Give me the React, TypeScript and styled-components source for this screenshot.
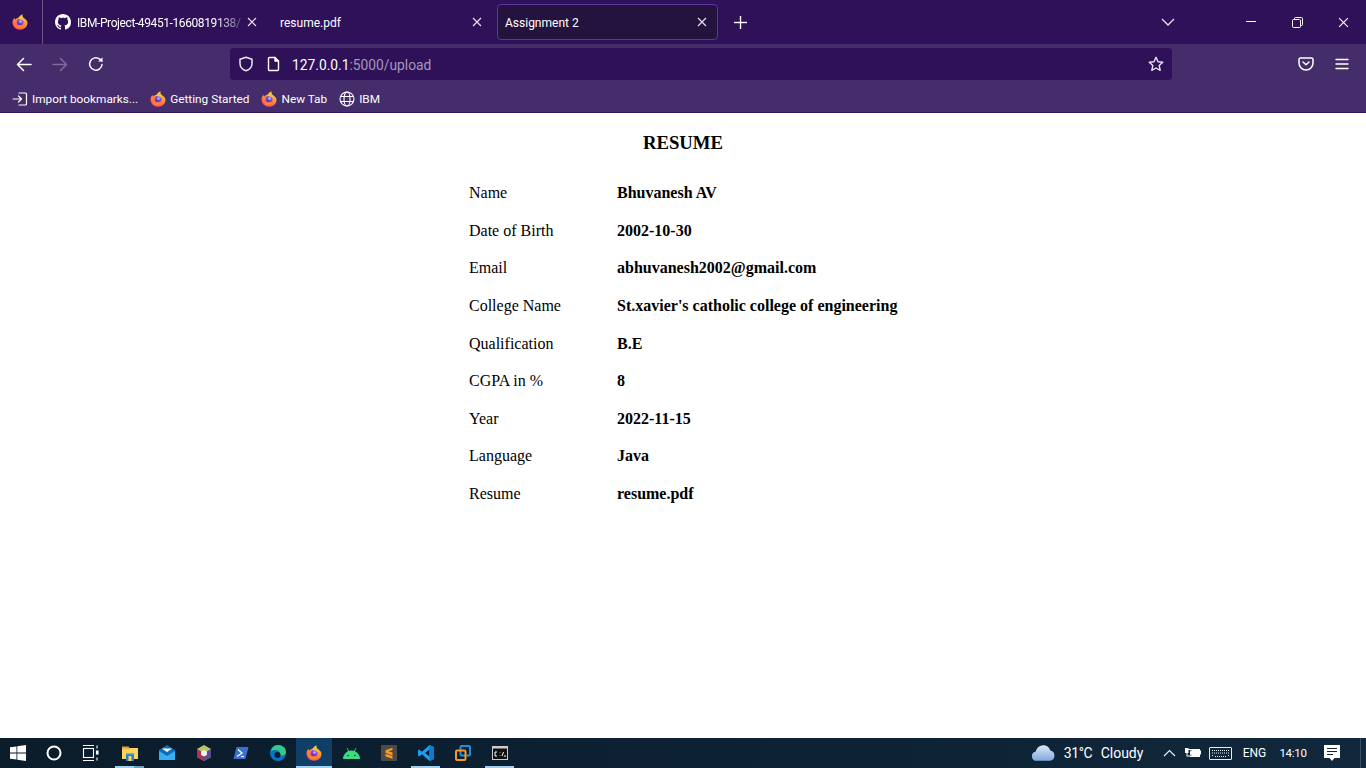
import React from "react";
import styled, { createGlobalStyle } from "styled-components";

const Global = createGlobalStyle`
  html, body { margin: 0; padding: 0; height: 100%; overflow: hidden; background: #fff; }
  #root { height: 100%; }
`;
const UI = `"Roboto", "Noto Sans", sans-serif`;

const Page = styled.div`display:flex;flex-direction:column;height:768px;width:1366px;overflow:hidden;`;
const TabBar = styled.div`display:flex;align-items:flex-start;height:44px;background:#2e1159;flex:none;color:#fff;font:12px/16px ${UI};`;
const MenuButton = styled.div`box-sizing:border-box;width:43px;height:44px;padding-right:2px;border-right:1px solid #6b5586;display:flex;align-items:center;justify-content:center;flex:none;`;
const Tab = styled.div<{ $w: number; $active?: boolean; $ml?: number; $pl?: number }>`
  box-sizing:border-box;width:${p => p.$w}px;height:36px;margin-top:4px;margin-left:${p => p.$ml ?? 0}px;flex:none;
  display:flex;align-items:center;padding:0 10px 0 ${p => p.$pl ?? 12}px;gap:6px;border-radius:4px;
  ${p => p.$active ? "background:#25133f;border:1px solid #5b35a0;" : ""}
`;
const TabLabel = styled.span<{ $fade?: boolean }>`
  flex:1;min-width:0;white-space:nowrap;overflow:hidden;padding-top:1px;
  ${p => p.$fade ? "letter-spacing:-.4px;mask-image:linear-gradient(to right,#000 84%,rgba(0,0,0,.25) 100%);" : ""}
`;
const NewTab = styled.div`width:44px;height:44px;display:flex;align-items:center;justify-content:center;flex:none;`;
const TabSpacer = styled.div`flex:1;`;
const BarIcon = styled.div<{ $w: number }>`width:${p => p.$w}px;height:44px;display:flex;align-items:center;justify-content:center;flex:none;`;
const NavBar = styled.div`display:flex;align-items:center;height:40px;background:#452c6a;flex:none;padding:0 6px 0 6px;color:#fff;`;
const NavButton = styled.div<{ $w?: number }>`width:${p => p.$w ?? 36}px;height:32px;display:flex;align-items:center;justify-content:center;flex:none;`;
const UrlBar = styled.div`width:942px;height:32px;margin:0 116px 0 116px;background:#2e1159;border-radius:4px;display:flex;align-items:center;padding:0 6px 0 8px;box-sizing:border-box;flex:none;`;
const UrlIcon = styled.div<{ $w: number; $ml?: number }>`width:${p => p.$w}px;margin-left:${p => p.$ml ?? 0}px;display:flex;align-items:center;justify-content:center;flex:none;`;
const UrlText = styled.div`flex:1;font:13.8px/18px ${UI};color:#fff;margin-left:10px;padding-top:2px;`;
const Dim = styled.span`color:#a698bb;`;
const Bookmarks = styled.div`display:flex;align-items:center;height:26px;background:#452c6a;flex:none;border-bottom:1px solid #2e1159;padding:2px 0 0 12px;gap:12px;color:#fff;font:11.8px/16px ${UI};`;
const Bookmark = styled.div`display:flex;align-items:center;gap:4px;white-space:nowrap;`;
const Content = styled.main`flex:1;background:#fff;color:#000;font:16px/18px "Liberation Serif","Times New Roman",serif;`;
const Title = styled.h1`font:bold 18.72px/22px "Liberation Serif",serif;margin:0;text-align:center;padding-top:19px;`;
const Table = styled.div`display:grid;grid-template-columns:148px 1fr;grid-auto-rows:37.6px;align-items:center;margin:20.5px 0 0 469px;`;
const Label = styled.div``;
const Value = styled.div`font-weight:bold;`;
const Taskbar = styled.div`display:flex;align-items:stretch;height:30px;flex:none;background:linear-gradient(to right,#0b1c2b,#0c2133 50%,#11273b);color:#fff;font:12px/30px ${UI};`;
const Cell = styled.div<{ $w?: number; $active?: boolean; $open?: boolean; $stack?: boolean; $ml?: number }>`
  position:relative;width:${p => p.$w ?? 37}px;margin-left:${p => p.$ml ?? 0}px;display:flex;align-items:center;justify-content:center;flex:none;
  ${p => p.$active ? "background:#0f3f66;" : ""}
  ${p => p.$open ? `&::after{content:"";position:absolute;left:${p.$active ? 0 : 4}px;right:${p.$active ? 0 : 4}px;bottom:0;height:2px;background:${p.$stack ? "linear-gradient(to right,#9fd0f0 66%,#6f9fc4 66%)" : "#9fd0f0"};}` : ""}
`;
const Tray = styled.div`margin-left:auto;display:flex;align-items:stretch;`;
const TrayText = styled.div<{ $w: number; $size?: number; $track?: number }>`width:${p => p.$w}px;font-size:${p => p.$size ?? 12}px;letter-spacing:${p => p.$track ?? 0}px;text-align:center;white-space:nowrap;flex:none;`;
const TrayEnd = styled.div`width:5px;margin-left:13px;border-left:1px solid #3a4d5f;flex:none;`;

let uid = 0;
const Firefox = ({ size = 16 }: { size?: number }) => {
  const id = "ff" + uid++;
  const pid = "fp" + uid++;
  return (
    <svg width={size} height={size} viewBox="0 0 32 32">
      <defs>
        <linearGradient id={id} x1="0.75" y1="0" x2="0.25" y2="1">
          <stop offset="0" stopColor="#ffe83f" />
          <stop offset="0.4" stopColor="#ff9a2a" />
          <stop offset="1" stopColor="#ff3d75" />
        </linearGradient>
        <linearGradient id={pid} x1="0.8" y1="0" x2="0.2" y2="1">
          <stop offset="0" stopColor="#9a6cf8" />
          <stop offset="1" stopColor="#5a28c0" />
        </linearGradient>
      </defs>
      <path d="M21 0.500C20 5 22 7 25 9C28.500 11.500 31 14 31 18C31 25.500 24.500 31.500 16 31.500C7.500 31.500 1 25 1 17C1 13 2.800 10 5 7.500C5 9.500 5.800 10.500 7 11C8 9 10 8 12.500 8C14 5 17 2.500 21 0.500z" fill={`url(#${id})`} />
      <circle cx="16.500" cy="16" r="7" fill={`url(#${pid})`} />
      <circle cx="17" cy="15" r="2.600" fill="#c0adff" />
      <path d="M3.500 14C5 19.500 9 23 15 23C20 23 23 20.500 24 16.500C25 23 21 29 15 29C8 29 3 22.500 3.500 14z" fill="#ff8230" />
      <path d="M13 7.800C18 7 23.500 10.500 25 16C22 12 18 10 13 10z" fill="#ffcf34" />
    </svg>
  );
};
const Github = () => (
  <svg width="16" height="16" viewBox="0 0 16 16" fill="#fff" style={{ flex: "none" }}>
    <path d="M8 0C3.580 0 0 3.580 0 8c0 3.540 2.290 6.530 5.470 7.590.4.070.55-.17.55-.38 0-.19-.01-.82-.01-1.490-2.010.37-2.530-.49-2.690-.94-.09-.23-.48-.94-.82-1.130-.28-.15-.68-.52-.01-.53.63-.01 1.080.58 1.230.82.720 1.210 1.870.870 2.330.660.070-.520.280-.870.510-1.070-1.780-.200-3.640-.890-3.640-3.950 0-.870.310-1.590.820-2.150-.080-.200-.360-1.020.080-2.120 0 0 .670-.210 2.200.820.640-.180 1.320-.270 2-.270s1.360.090 2 .270c1.530-1.040 2.200-.820 2.200-.820.440 1.100.160 1.920.080 2.120.510.560.820 1.270.820 2.150 0 3.070-1.870 3.750-3.650 3.950.290.250.540.730.540 1.480 0 1.070-.010 1.930-.010 2.200 0 .210.150.460.550.380A8.010 8.010 0 0 0 16 8c0-4.420-3.580-8-8-8z" />
  </svg>
);
const Close = ({ size = 10, w = 1.200, color = "#e6e0ee" }: { size?: number; w?: number; color?: string }) => (
  <svg width={size} height={size} viewBox="0 0 10 10" stroke={color} strokeWidth={w} fill="none" style={{ flex: "none" }}>
    <path d="M1 1l8 8M9 1l-8 8" />
  </svg>
);
const Stroke = ({ s = 16, c = "#fff", sw = 1.500, children }: { s?: number; c?: string; sw?: number; children: React.ReactNode }) => (
  <svg width={s} height={s} viewBox="0 0 16 16" fill="none" stroke={c} strokeWidth={sw} strokeLinecap="round" strokeLinejoin="round">{children}</svg>
);
const Back = () => <Stroke><path d="M15 8.500H1.500M7.500 2.500L1.500 8.500l6 6" /></Stroke>;
const Fwd = ({ c = "#fff" }: { c?: string }) => <Stroke c={c}><path d="M1 8.500h13.500M8.500 2.500l6 6-6 6" /></Stroke>;
const Reload = () => <Stroke><path d="M14 8.500A6.200 6.200 0 1 1 11.800 3.200L14 5" /><path d="M14.500 1.200v4.300h-4.300z" fill="#fff" stroke="none" /></Stroke>;
const Shield = () => <Stroke c="#ece8f2"><path d="M8 1.200l6 2v4.300c0 3.800-2.600 6.200-6 7.300-3.400-1.100-6-3.500-6-7.300V3.200z" /></Stroke>;
const PageIcon = () => <Stroke sw={1.400}><path d="M3.500 1.500h5.500l3.500 3.500v8.500a1 1 0 0 1-1 1h-8a1 1 0 0 1-1-1v-11a1 1 0 0 1 1-1z" /><path d="M9 1.500v3.500h3.500" fill="#fff" /></Stroke>;
const Star = () => <Stroke sw={1.400} c="#e8e2ef"><path d="M8 1.300l2 4.500 4.800.5-3.600 3.200 1 4.800L8 12l-4.200 2.300 1-4.800L1.200 6.300 6 5.800z" /></Stroke>;
const Pocket = () => <Stroke><path d="M2.500 2h11A1.500 1.500 0 0 1 15 3.500V7a7 7 0 0 1-14 0V3.500A1.500 1.500 0 0 1 2.500 2z" /><path d="M5 6l3 2.800L11 6" /></Stroke>;
const Burger = () => <Stroke sw={1.400}><path d="M2 3.500h12M2 8h12M2 12.500h12" /></Stroke>;
const Plus = () => <svg width="13" height="13" viewBox="0 0 13 13" fill="#fff"><rect x="5.800" width="1.400" height="13" /><rect y="5.800" width="13" height="1.400" /></svg>;
const Globe = () => (
  <Stroke sw={1.100}>
    <circle cx="8" cy="8" r="7" /><ellipse cx="8" cy="8" rx="3" ry="7" /><path d="M1.500 5.500h13M1.500 10.500h13" />
  </Stroke>
);
const ImportIcon = () => (
  <Stroke sw={1.200}><path d="M7 2h6.500a1 1 0 0 1 1 1v10a1 1 0 0 1-1 1H7M1 8h8.500M6.500 5l3 3-3 3" /></Stroke>
);
const WinLogo = () => (
  <svg width="16" height="16" viewBox="0 0 16 16" fill="#fff"><path d="M0 2.300l6.500-.9v6.200H0zM7.300 1.300L16 0v7.600H7.300zM0 8.400h6.500v6.200L0 13.700zM7.300 8.400H16V16l-8.700-1.300z" /></svg>
);
const Cortana = () => <svg width="16" height="16" viewBox="0 0 16 16"><circle cx="8" cy="8" r="6.500" fill="none" stroke="#fff" strokeWidth="2" /></svg>;
const TaskView = () => (
  <svg width="17" height="16" viewBox="0 0 17 16" fill="none" stroke="#fff" strokeWidth="1.100">
    <path d="M1 .5h11M1 15.500h11" /><rect x="1.500" y="3.500" width="10" height="9" /><path d="M15 .5v3M15 12.500v3" /><rect x="14.500" y="6" width="1.500" height="3" fill="#fff" />
  </svg>
);
const Explorer = () => (
  <svg width="16" height="16" viewBox="0 0 16 16">
    <path d="M0 1.500h6.500l1.500 2H0z" fill="#e0a526" /><rect y="3" width="16" height="11" fill="#fcd462" />
    <path d="M0 3h8v1.500H0z" fill="#f0b93a" /><rect x="4" y="8" width="8" height="8" fill="#2a7fc4" /><rect x="6.500" y="11" width="3" height="5" fill="#fcd462" /><rect x="4" y="8" width="8" height="1.500" fill="#5cb0e8" />
  </svg>
);
const Mail = () => (
  <svg width="16" height="16" viewBox="0 0 16 16"><path d="M0 5l8-5 8 5v10H0z" fill="#0f6cb8" /><path d="M0 6l8 5 8-5v9H0z" fill="#36aef0" /><path d="M3 3.500h10L8 7z" fill="#fff" /></svg>
);
const BoxApp = () => (
  <svg width="16" height="16" viewBox="0 0 16 16">
    <path d="M8 0l7 4v8l-7 4-7-4V4z" fill="#b6c46a" /><path d="M1 4l7 4v8l-7-4z" fill="#b03050" /><path d="M15 4l-7 4v8l7-4z" fill="#5a4a90" /><path d="M5 6.500l3-1.500 3 1.500v3.500l-3 1.500-3-1.500z" fill="#eee" />
  </svg>
);
const PowerShell = () => (
  <svg width="16" height="14" viewBox="0 0 16 14"><path d="M3.500 1h12L12.500 13H.5z" fill="#3a6fd0" /><path d="M5 3.500L9 7l-5 3.500" fill="none" stroke="#fff" strokeWidth="1.300" /><path d="M8 10.500h3" stroke="#fff" strokeWidth="1.200" /></svg>
);
const Edge = () => (
  <svg width="16" height="16" viewBox="0 0 16 16">
    <circle cx="8" cy="8" r="8" fill="#0c72c4" /><path d="M1 6C2 2 5 0 8 0c4.500 0 8 3 8 7 0 2.500-2 3.500-4 3.500-1.500 0-3-.5-3-1.500 2-1 0-4-3-4-2 0-4 .5-5 1z" fill="#35c88a" /><circle cx="7.500" cy="10" r="3" fill="#0b1c2b" />
  </svg>
);
const Android = () => (
  <svg width="17" height="11" viewBox="0 0 17 11" fill="#3ddc84"><path d="M0 11a8.500 8.500 0 0 1 17 0z" /><path d="M4 .2l2 3.500M13 .2l-2 3.500" stroke="#3ddc84" strokeWidth=".9" /><circle cx="5" cy="7.500" r=".8" fill="#0c2133" /><circle cx="12" cy="7.500" r=".8" fill="#0c2133" /></svg>
);
const Sublime = () => (
  <svg width="16" height="16" viewBox="0 0 16 16"><rect width="16" height="16" rx="1" fill="#4a4a4a" /><path d="M11.500 2.800L4.500 5.200v2.600l7 2.400V7.600l-4.300-1.300 4.300-1.300zM4.500 8.500l7 2.300v-.3L4.500 8.200zM4.500 9v2.600l7 2.100-.1-2.600z" fill="#ff9a1f" /></svg>
);
const VSCode = () => (
  <svg width="16" height="16" viewBox="0 0 16 16"><path d="M11.500 0L16 2v12l-4.500 2L4 9.200 1.200 11.400 0 10.700V5.300l1.200-.7L4 6.800z" fill="#1f9cf0" /><path d="M11.500 4.500L7 8l4.500 3.500z" fill="#0b1c2b" /><path d="M11.500 0L16 2v12l-4.500 2z" fill="#0e7ccc" /></svg>
);
const Squares = () => (
  <svg width="16" height="16" viewBox="0 0 16 16" fill="none" strokeWidth="2"><rect x="5.500" y="1" width="9.500" height="9.500" rx="1" stroke="#1e8fdc" /><rect x="1" y="5.500" width="9.500" height="9.500" rx="1" stroke="#f59a23" /></svg>
);
const Cmd = () => (
  <svg width="16" height="14" viewBox="0 0 16 14"><rect x=".5" y=".5" width="15" height="13" fill="#111" stroke="#ccc" /><rect x="0" y="0" width="16" height="2.500" fill="#ccc" /><path d="M5 6H3v4h2M8 6.500v.5M8 9v.5M10 10l1.500-4M12 10h2" stroke="#fff" fill="none" /></svg>
);
const Cloud = () => (
  <svg width="24" height="16" viewBox="0 0 26 17"><defs><linearGradient id="cl" x1="0" y1="0" x2="0" y2="1"><stop offset="0" stopColor="#dbe8f8" /><stop offset="1" stopColor="#7fa9dc" /></linearGradient></defs><path d="M6 17a5 5 0 0 1-1-9.900C6 3 9.500 0 13.500 0c3.500 0 6.500 2.300 7.500 5.800A5.700 5.700 0 0 1 20.500 17z" fill="url(#cl)" /></svg>
);
const TrayChevron = () => <svg width="13" height="8" viewBox="0 0 13 8" fill="none" stroke="#e8edf2" strokeWidth="1.200"><path d="M1 7l5.500-5.500L12 7" /></svg>;
const Plug = () => (
  <svg width="16" height="12" viewBox="0 0 16 12" fill="#fff"><path d="M5 2h10v1.500h1v4h-1V10H5V8.500h1.500v-.8H5V4.300h1.500V3.500H5z" /><path d="M0 1h3.500v1H5v1H3.500v3H2.500v2.500H5v1H1.500V6H0z" /></svg>
);
const Keyboard = () => (
  <svg width="23" height="13" viewBox="0 0 23 13" fill="none" stroke="#e8edf2" strokeWidth="1"><rect x=".5" y=".5" width="22" height="12" rx=".5" /><path d="M3 3.500h17M3 6h17M3 8.500h1M6 9.500h11M19 8.500h1" strokeDasharray="1 1" /></svg>
);
const Notify = () => (
  <svg width="16" height="16" viewBox="0 0 16 16"><path d="M0 0h16v13h-5.500L8 16l-2.500-3H0z" fill="#fff" /><path d="M3 3.500h10M3 6.500h10M3 9.500h6" stroke="#0f2436" /></svg>
);

const rows: [string, string][] = [
  ["Name", "Bhuvanesh AV"],
  ["Date of Birth", "2002-10-30"],
  ["Email", "abhuvanesh2002@gmail.com"],
  ["College Name", "St.xavier's catholic college of engineering"],
  ["Qualification", "B.E"],
  ["CGPA in %", "8"],
  ["Year", "2022-11-15"],
  ["Language", "Java"],
  ["Resume", "resume.pdf"],
];

export default function App() {
  return (
    <Page>
      <Global />
      <TabBar>
        <MenuButton><Firefox /></MenuButton>
        <Tab $w={224}>
          <Github />
          <TabLabel $fade>IBM-Project-49451-1660819138/</TabLabel>
          <Close />
        </Tab>
        <Tab $w={225} $pl={13}>
          <TabLabel>resume.pdf</TabLabel>
          <Close />
        </Tab>
        <Tab $w={221} $ml={5} $pl={7} $active>
          <TabLabel>Assignment 2</TabLabel>
          <Close />
        </Tab>
        <NewTab><Plus /></NewTab>
        <TabSpacer />
        <BarIcon $w={44}><svg width="14" height="8" viewBox="0 0 14 8" fill="none" stroke="#e8e2ef" strokeWidth="1.300"><path d="M1 1l6 6 6-6" /></svg></BarIcon>
        <BarIcon $w={38} />
        <BarIcon $w={46}><svg width="10" height="2"><rect width="10" height="1" fill="#fff" /></svg></BarIcon>
        <BarIcon $w={46}><svg width="11" height="11" viewBox="0 0 11 11" fill="none" stroke="#fff"><rect x=".5" y="2.500" width="8" height="8" rx="1" /><path d="M2.500 2.500v-1a1 1 0 0 1 1-1h6a1 1 0 0 1 1 1v6a1 1 0 0 1-1 1h-1" /></svg></BarIcon>
        <BarIcon $w={46}><Close size={11} w={1} color="#fff" /></BarIcon>
      </TabBar>
      <NavBar>
        <NavButton><Back /></NavButton>
        <NavButton><Fwd c="#7d6a97" /></NavButton>
        <NavButton><Reload /></NavButton>
        <UrlBar>
          <UrlIcon $w={16}><Shield /></UrlIcon>
          <UrlIcon $w={16} $ml={12}><PageIcon /></UrlIcon>
          <UrlText>127.0.0.1<Dim>:5000/upload</Dim></UrlText>
          <UrlIcon $w={20}><Star /></UrlIcon>
        </UrlBar>
        <NavButton><Pocket /></NavButton>
        <NavButton><Burger /></NavButton>
      </NavBar>
      <Bookmarks>
        <Bookmark><ImportIcon /><span>Import bookmarks...</span></Bookmark>
        <Bookmark><Firefox /><span>Getting Started</span></Bookmark>
        <Bookmark><Firefox /><span>New Tab</span></Bookmark>
        <Bookmark><Globe /><span>IBM</span></Bookmark>
      </Bookmarks>
      <Content>
        <Title>RESUME</Title>
        <Table>
          {rows.map(([k, v]) => (
            <React.Fragment key={k}>
              <Label>{k}</Label>
              <Value>{v}</Value>
            </React.Fragment>
          ))}
        </Table>
      </Content>
      <Taskbar>
        <Cell $w={36}><WinLogo /></Cell>
        <Cell $w={36}><Cortana /></Cell>
        <Cell $w={36}><TaskView /></Cell>
        <Cell $ml={3} $open $stack><Explorer /></Cell>
        <Cell><Mail /></Cell>
        <Cell><BoxApp /></Cell>
        <Cell><PowerShell /></Cell>
        <Cell><Edge /></Cell>
        <Cell $w={36} $active $open><Firefox /></Cell>
        <Cell $ml={1}><Android /></Cell>
        <Cell><Sublime /></Cell>
        <Cell $open><VSCode /></Cell>
        <Cell><Squares /></Cell>
        <Cell $open><Cmd /></Cell>
        <Tray>
          <Cell $w={32}><Cloud /></Cell>
          <TrayText $w={38} $size={14} $track={-0.4}>31°C</TrayText>
          <TrayText $w={50} $size={14}>Cloudy</TrayText>
          <Cell $w={32} $ml={6}><TrayChevron /></Cell>
          <Cell $w={16}><Plug /></Cell>
          <Cell $w={39}><Keyboard /></Cell>
          <TrayText $w={29}>ENG</TrayText>
          <TrayText $w={48} $size={11.5} $track={-0.3}>14:10</TrayText>
          <Cell $w={30}><Notify /></Cell>
          <TrayEnd />
        </Tray>
      </Taskbar>
    </Page>
  );
}
